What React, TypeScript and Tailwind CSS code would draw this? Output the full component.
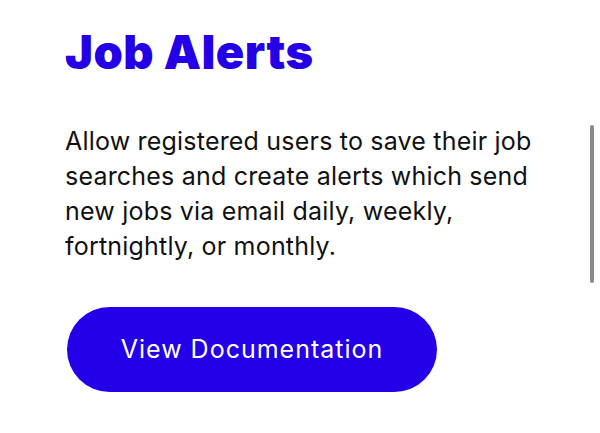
import React from 'react';

const App: React.FC = () => {
  return (
    <div className="relative w-[600px] h-[433px] bg-white overflow-hidden" style={{ fontFamily: 'Inter, "Noto Sans", sans-serif' }}>
      <div className="pl-[65px] pt-[24px] flex flex-col items-start">
        <h1 className="text-[47px] leading-[56px] font-black tracking-[0.4px] text-[#2400e6]">Job Alerts</h1>
        <p className="mt-[44px] w-[490px] text-[25px] leading-[35px] tracking-[0.2px] text-[#111111]">
          Allow registered users to save their job searches and create alerts which send new jobs via email daily, weekly, fortnightly, or monthly.
        </p>
        <button className="mt-[43px] ml-[2px] w-[370px] h-[85px] rounded-full bg-[#2400e8] text-white text-[25px] tracking-[1px] font-normal">
          View Documentation
        </button>
      </div>
      <div className="absolute left-[590px] top-[125px] w-[4px] h-[158px] rounded-full bg-[#8a8a8a]" />
    </div>
  );
};

export default App;
